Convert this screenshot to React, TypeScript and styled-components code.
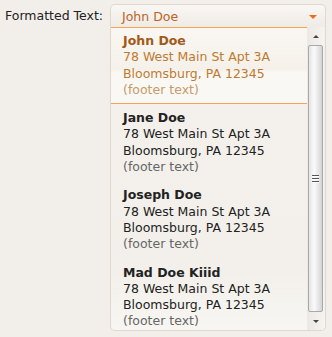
import React from "react";
import styled, { createGlobalStyle } from "styled-components";

const Global = createGlobalStyle`
  html, body { margin: 0; padding: 0; }
  body {
    background: #f2efeb;
    font-family: "DejaVu Sans", Verdana, sans-serif;
    font-size: 12.5px;
    width: 332px;
    height: 337px;
    overflow: hidden;
  }
`;

const Page = styled.div`
  display: flex;
  align-items: flex-start;
  padding: 4px 0 0 5px;
  gap: 5px;
`;

const Label = styled.label`
  color: #222;
  line-height: 16px;
  padding-top: 4px;
  width: 100px;
  flex: none;
`;

const Select = styled.div`
  display: flex;
  flex-direction: column;
  width: 216px;
`;

const Button = styled.div`
  height: 22px;
  display: flex;
  align-items: center;
  justify-content: space-between;
  padding: 0 8px 0 11px;
  border: 1px solid #e2d7cc;
  border-bottom: none;
  border-radius: 5px 5px 0 0;
  background: linear-gradient(#f9f7f4, #efebe6);
  color: #c0641e;
`;

const Arrow = styled.span`
  width: 0;
  height: 0;
  border-left: 4px solid transparent;
  border-right: 4px solid transparent;
  border-top: 4px solid #ef6d12;
  margin-top: 2px;
`;

const List = styled.div`
  display: flex;
  height: 303px;
  border: 1px solid #e2d7cc;
  border-top: none;
  border-radius: 0 0 5px 5px;
  background: linear-gradient(#f4f1ed, #f3f0eb 80%, #f8f6f2);
  overflow: hidden;
`;

const Items = styled.ul`
  list-style: none;
  margin: 0;
  padding: 0;
  flex: 1;
  overflow: hidden;
`;

const Item = styled.li<{ $active?: boolean }>`
  padding: 5px 8px 5px 12px;
  line-height: 16.3px;
  color: ${(p) => (p.$active ? "#c07a30" : "#222")};
  border-top: 1px solid ${(p) => (p.$active ? "#f5a552" : "transparent")};
  border-bottom: 1px solid ${(p) => (p.$active ? "#f5a552" : "transparent")};
  background: ${(p) =>
    p.$active ? "linear-gradient(#faf7f3, #f5f1ea 55%, #faf8f4 60%)" : "transparent"};
`;

const Name = styled.div<{ $active?: boolean }>`
  font-weight: bold;
  color: ${(p) => (p.$active ? "#a35a17" : "#222")};
`;

const Footer = styled.div<{ $active?: boolean }>`
  color: ${(p) => (p.$active ? "#c79a6a" : "#666")};
`;

const Scrollbar = styled.div`
  width: 17px;
  flex: none;
  display: flex;
  flex-direction: column;
  background: linear-gradient(90deg, #ece9e4, #f5f3ef);
  margin-right: 1px;
`;

const ScrollBtn = styled.div`
  height: 18px;
  display: flex;
  align-items: center;
  justify-content: center;
`;

const Tri = styled.span<{ $up?: boolean }>`
  width: 0;
  height: 0;
  border-left: 3px solid transparent;
  border-right: 3px solid transparent;
  ${(p) => (p.$up ? "border-bottom: 3px solid #444;" : "border-top: 3px solid #444;")}
`;

const Thumb = styled.div`
  flex: 1;
  margin: 0 1px;
  border: 1px solid #a9a9a9;
  border-radius: 2px;
  background: linear-gradient(90deg, #e4e4e4, #fafafa 40%, #d4d4d4);
  display: flex;
  align-items: center;
  justify-content: center;
`;

const Grip = styled.div`
  display: flex;
  flex-direction: column;
  gap: 1px;
  span {
    display: block;
    width: 7px;
    height: 1px;
    background: #555;
    border-bottom: 1px solid #fff;
  }
`;

const people = [
  { name: "John Doe", active: true },
  { name: "Jane Doe" },
  { name: "Joseph Doe" },
  { name: "Mad Doe Kiiid" },
];

export default function App() {
  return (
    <>
      <Global />
      <Page>
        <Label>Formatted Text:</Label>
        <Select>
          <Button>
            <span>John Doe</span>
            <Arrow />
          </Button>
          <List>
            <Items>
              {people.map((p) => (
                <Item key={p.name} $active={p.active}>
                  <Name $active={p.active}>{p.name}</Name>
                  <div>78 West Main St Apt 3A</div>
                  <div>Bloomsburg, PA 12345</div>
                  <Footer $active={p.active}>(footer text)</Footer>
                </Item>
              ))}
            </Items>
            <Scrollbar>
              <ScrollBtn>
                <Tri $up />
              </ScrollBtn>
              <Thumb>
                <Grip>
                  <span />
                  <span />
                  <span />
                </Grip>
              </Thumb>
              <ScrollBtn>
                <Tri />
              </ScrollBtn>
            </Scrollbar>
          </List>
        </Select>
      </Page>
    </>
  );
}
